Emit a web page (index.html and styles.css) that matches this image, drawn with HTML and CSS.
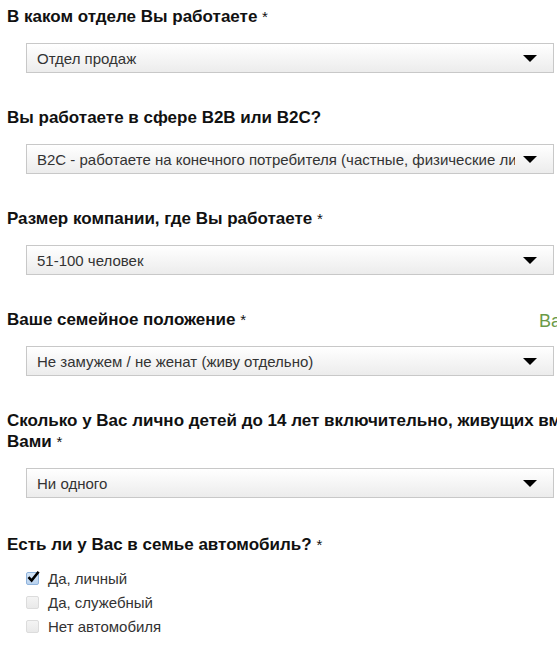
FILE: index.html
```html
<!DOCTYPE html>
<html lang="ru">
<head>
  <meta charset="UTF-8" />
  <meta name="viewport" content="width=device-width, initial-scale=1" />
  <title>Анкета</title>
  <link rel="stylesheet" href="styles.css">
</head>
<body>

<form class="survey">

  <div class="question">
    <h3 class="q-title">В каком отделе Вы работаете <span class="req">*</span></h3>
    <div class="select"><span class="select-text">Отдел продаж</span><span class="arrow"></span></div>
  </div>

  <div class="question">
    <h3 class="q-title">Вы работаете в сфере B2B или B2C?</h3>
    <div class="select"><span class="select-text">B2C - работаете на конечного потребителя (частные, физические лица)</span><span class="arrow"></span></div>
  </div>

  <div class="question">
    <h3 class="q-title">Размер компании, где Вы работаете <span class="req">*</span></h3>
    <div class="select"><span class="select-text">51-100 человек</span><span class="arrow"></span></div>
  </div>

  <div class="question">
    <div class="q-row">
      <h3 class="q-title">Ваше семейное положение <span class="req">*</span></h3>
      <span class="side-note">Ваш</span>
    </div>
    <div class="select"><span class="select-text">Не замужем / не женат (живу отдельно)</span><span class="arrow"></span></div>
  </div>

  <div class="question">
    <h3 class="q-title wide">Сколько у Вас лично детей до 14 лет включительно, живущих вместе с Вами <span class="req">*</span></h3>
    <div class="select"><span class="select-text">Ни одного</span><span class="arrow"></span></div>
  </div>

  <div class="question last">
    <h3 class="q-title">Есть ли у Вас в семье автомобиль? <span class="req">*</span></h3>
    <ul class="checks">
      <li><span class="box checked">
        <svg viewBox="0 0 14 14" width="14" height="14"><path d="M2.5 7.2 L5.6 10.6 L12.6 1.8" fill="none" stroke="#000" stroke-width="2.6" /></svg>
      </span>Да, личный</li>
      <li><span class="box"></span>Да, служебный</li>
      <li><span class="box"></span>Нет автомобиля</li>
    </ul>
  </div>

</form>

</body>
</html>
```

FILE: styles.css
```css
* {
  margin: 0;
  padding: 0;
  box-sizing: border-box;
}

html, body {
  overflow: hidden;
}

body {
  font-family: 'Liberation Sans', Arial, sans-serif;
  color: #000;
  background: #fff;
}

.survey {
  width: 557px;
  padding: 6px 0 0 7px;
}

.question {
  margin-bottom: 34px;
}

.question.last {
  padding-top: 2px;
}

.q-title {
  font-size: 17px;
  line-height: 21px;
  font-weight: bold;
  color: #111;
  margin-bottom: 16px;
}

.question.last .q-title {
  margin-bottom: 11px;
}

/* long question wraps past the visible column */
.q-title.wide {
  width: 650px;
}

.req {
  font-weight: normal;
  font-size: 15px;
  line-height: 1;
}

.q-row {
  display: flex;
  align-items: flex-start;
}

.q-row .q-title {
  flex: 1;
}

.side-note {
  flex: none;
  width: 18px;
  overflow: hidden;
  white-space: nowrap;
  color: #6b9a48;
  font-size: 18px;
  line-height: 21px;
  margin-top: 2px;
}

.select {
  display: flex;
  align-items: center;
  margin-left: 19px;
  width: 528px;
  height: 30px;
  border: 1px solid #c8c8c8;
  background: linear-gradient(#ffffff, #ececec);
  padding: 0 16px 0 10px;
}

.select-text {
  flex: 1;
  overflow: hidden;
  white-space: nowrap;
  font-size: 15px;
  color: #333;
  margin-right: 8px;
}

.arrow {
  flex: none;
  width: 0;
  height: 0;
  border-left: 7px solid transparent;
  border-right: 7px solid transparent;
  border-top: 7px solid #000;
}

.checks {
  list-style: none;
  margin-left: 19px;
}

.checks li {
  display: flex;
  align-items: center;
  height: 24px;
  font-size: 15px;
  color: #333;
}

.box {
  display: flex;
  align-items: center;
  justify-content: center;
  width: 13px;
  height: 13px;
  margin-right: 9px;
  border: 1px solid #dcdcdc;
  border-radius: 2px;
  background: linear-gradient(#f4f4f4, #e9e9e9);
}

.box.checked {
  border-color: #8fb3dc;
  background: linear-gradient(#d6e6f7, #b9d2ee);
}

.box svg {
  flex: none;
  margin-top: -3px;
  margin-left: 1px;
}
```
